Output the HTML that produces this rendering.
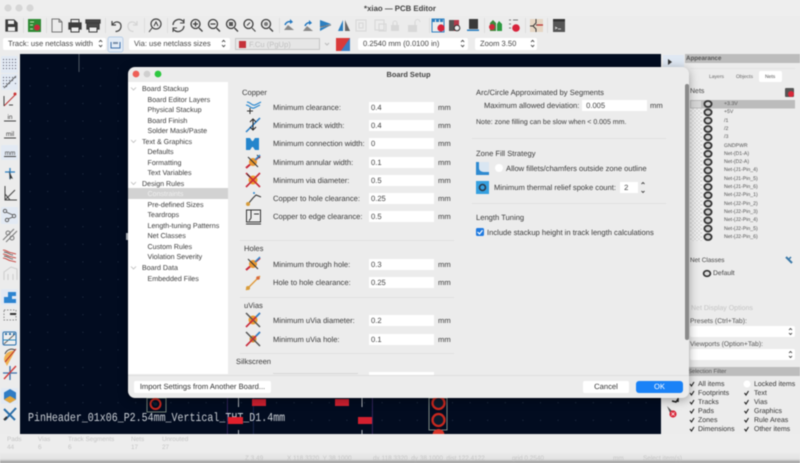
<!DOCTYPE html>
<html><head><meta charset="utf-8">
<style>
html,body{margin:0;padding:0;width:800px;height:463px;overflow:hidden;background:#ececec}
body{font-family:"Liberation Sans",sans-serif;color:#3a3a3a;position:relative;text-rendering:geometricPrecision}
.a{position:absolute}
.t{position:absolute;white-space:nowrap;line-height:10px;font-size:7.6px;margin-top:.6px}
.r{font-size:7.1px}
.i{position:absolute;background:#fff;height:11px;font-size:7.6px;line-height:11px;padding-left:2px;box-sizing:border-box;color:#444}
.s{position:absolute;background:#fff;height:12px;border-radius:2px;font-size:7.6px;line-height:12px;padding-left:5px;box-sizing:border-box;color:#444}
.l{position:absolute;height:1px;background:#e0e0e0}
.n{position:absolute;left:724px;font-size:5.2px;line-height:6px;color:#555;white-space:nowrap}
.c{position:absolute;font-size:7px;line-height:9px;color:#333;white-space:nowrap}
.g{color:#c4c4c4;font-size:6.4px}
#all{position:absolute;left:0;top:0;width:800px;height:463px;filter:blur(.45px)}
</style></head><body><div id="all">

<svg class="a" style="left:0;top:0" width="800" height="463" viewBox="0 0 800 463">
<defs>
<pattern id="d" x="12" y="15" width="17.6" height="17.6" patternUnits="userSpaceOnUse"><rect width="1" height="1" fill="#26344a"/></pattern>
<pattern id="ck" width="4" height="4" patternUnits="userSpaceOnUse"><rect width="4" height="4" fill="#f4f4f4"/><rect width="2" height="2" fill="#d9d9d9"/><rect x="2" y="2" width="2" height="2" fill="#d9d9d9"/></pattern>
<linearGradient id="bt" x1="0" y1="0" x2="0" y2="1"><stop offset="0" stop-color="#e9e9e9"/><stop offset=".6" stop-color="#e4e4e4"/><stop offset="1" stop-color="#8f8f8f"/></linearGradient>
</defs>
<rect width="800" height="463" fill="#ececec"/>
<rect y="0" width="800" height="16" fill="#eeeeee"/>
<circle cx="8" cy="8" r="3.6" fill="#d6d6d6"/><circle cx="19" cy="8" r="3.6" fill="#d6d6d6"/><circle cx="30" cy="8" r="3.6" fill="#d6d6d6"/>
<!-- canvas -->
<rect x="20" y="54" width="641" height="380" fill="#020c20"/>
<rect x="20" y="54" width="641" height="380" fill="url(#d)"/>
<rect x="78.5" y="54" width="1" height="18" fill="#4b5563"/>
<rect x="126" y="233" width="2" height="7" fill="#b9bec6"/>
<!-- canvas footprint stuff -->
<g>
<rect x="147" y="398" width="19" height="14" fill="none" stroke="#8a9a8a" stroke-width=".8"/>
<circle cx="155.500" cy="404" r="5" fill="none" stroke="#c8281f" stroke-width="2"/><circle cx="155.500" cy="404" r="2" fill="#0a2030"/>
<rect x="429" y="398" width="18" height="32" fill="none" stroke="#9aa79a" stroke-width=".8"/>
<circle cx="438.500" cy="403" r="6" fill="#0b1b2c" stroke="#c8281f" stroke-width="2.300"/><circle cx="438.500" cy="420" r="6" fill="#0b1b2c" stroke="#c8281f" stroke-width="2.300"/><circle cx="438.500" cy="435" r="6" fill="#d8352a"/>
<rect x="227" y="398" width=".8" height="36" fill="#3d2a66"/><rect x="372" y="398" width=".8" height="36" fill="#3d2a66"/><rect x="253" y="398" width=".8" height="36" fill="#1c2a55"/>
<rect x="238" y="398" width="1" height="9" fill="#aeb3b8"/><rect x="238" y="430" width="1" height="4" fill="#aeb3b8"/>
<rect x="361.500" y="398" width="1" height="9" fill="#aeb3b8"/><rect x="361.500" y="430" width="1" height="4" fill="#aeb3b8"/>
<rect x="252" y="399" width="14" height="7" fill="#cf2030"/><rect x="335" y="399" width="14" height="7" fill="#cf2030"/>
<rect x="358" y="417" width="14" height="7" fill="#d3202f"/>
</g>
<!-- separators in toolbar -->
<g fill="#dcdcdc"><rect x="23" y="18" width="1" height="15"/><rect x="46" y="18" width="1" height="15"/><rect x="105" y="18" width="1" height="15"/><rect x="144" y="18" width="1" height="15"/><rect x="167" y="18" width="1" height="15"/><rect x="279" y="18" width="1" height="15"/><rect x="429" y="18" width="1" height="15"/><rect x="484" y="18" width="1" height="15"/><rect x="525" y="18" width="1" height="15"/><rect x="547" y="18" width="1" height="15"/></g>
<!-- top toolbar icons -->
<g fill="none" stroke="#3c3c3c" stroke-width="1.300">
<path d="M6 20h8l3 3v8H6z" fill="#3c3c3c"/><rect x="8" y="20.500" width="6" height="3.500" fill="#eee" stroke="none"/><rect x="8" y="27" width="7" height="4" fill="#eee" stroke="none"/>
<path d="M52 19h7l3 3v10H52z" stroke="#777" stroke-width="1"/><path d="M59 19v3h3" stroke="#777" stroke-width="1"/>
<rect x="69" y="23" width="12" height="6" fill="#3c3c3c"/><rect x="71" y="19.500" width="8" height="3.500" stroke-width="1"/><rect x="71" y="27" width="8" height="5" fill="#eee" stroke-width="1"/>
<rect x="87" y="23" width="12" height="6" fill="#4a4a4a"/><rect x="86" y="20" width="14" height="3" fill="#4a4a4a"/><rect x="89" y="27" width="8" height="5" fill="#eee" stroke-width="1"/>
<path d="M112 21v4h4M112.500 24.500c3-4 8-3 8.500 1 .3 3.500-2 6-5.500 6" stroke="#444" stroke-width="1.200"/>
<path d="M137 21v4h-4M136.500 24.500c-3-4-8-3-8.500 1-.3 3.500 2 6 5.500 6" stroke="#d4d4d4" stroke-width="1.200"/>
<circle cx="156" cy="24" r="5" stroke="#444" stroke-width="1.200"/><path d="M152 28l-3 4M154 26l2-4 2 4" stroke-width="1"/>
<path d="M173 25a6 6 0 0 1 10-4l1 1M184 26a6 6 0 0 1-10 4l-1-1" stroke="#444" stroke-width="1.300"/><path d="M184 19v4h-4M173 32v-4h4" stroke="#444" stroke-width="1"/>
<circle cx="195.500" cy="24" r="4.500"/><path d="M199 28l3.500 3.500M193 24h5M195.500 21.500v5"/>
<circle cx="213" cy="24" r="4.500"/><path d="M216.500 28l3.500 3.500M210.500 24h5"/>
<circle cx="231" cy="24" r="4.500"/><path d="M234.500 28l3.500 3.500"/><rect x="229" y="22" width="4" height="4" fill="#555" stroke="none"/>
<circle cx="248.500" cy="24" r="4.500"/><path d="M252 28l3.500 3.500M247 25.500l3-3" stroke-width="1"/>
<circle cx="266" cy="24" r="4.500"/><path d="M269.500 28l3.500 3.500"/><circle cx="266" cy="24" r="2" fill="#777" stroke="none"/>
</g>
<!-- kicad board icon -->
<rect x="28" y="19" width="13" height="13" fill="#2f8a34"/><circle cx="37" cy="27.500" r="3" fill="#c9283a"/><path d="M30 22h4M30 25h3M30 29h3" stroke="#bfe0b0" stroke-width="1"/>
<!-- flip / mirror icons -->
<path d="M284 30l4-5 6 5z" fill="#888"/><path d="M285 25c1-3 4-4 6-3" stroke="#2277c0" stroke-width="1.500" fill="none"/><path d="M290 19l3 3-3 2z" fill="#2277c0"/>
<path d="M303 31l4-5 6 5z" fill="#888"/><path d="M305 26c1-3 4-4 6-3" stroke="#2277c0" stroke-width="1.500" fill="none"/><path d="M309 20l3 3-3 2z" fill="#2277c0"/>
<path d="M320 20l11 4-11 3zM320 28l11-3-11 6z" fill="#2c7fc0"/><path d="M320 27l11-2" stroke="#777"/>
<path d="M343 20l-5 11h5z" fill="#2c7fc0"/><path d="M345 20l5 11h-5z" fill="#666"/>
<g fill="none" stroke="#d8d8d8" stroke-width="1.100"><rect x="356" y="20" width="10" height="11"/><rect x="359" y="23" width="4" height="5"/><rect x="375" y="20" width="9" height="10"/><rect x="379" y="24" width="7" height="7"/></g>
<rect x="391" y="25" width="8" height="6" fill="#d8d8d8"/><path d="M393 25v-2a2 2 0 0 1 4 0v2" fill="none" stroke="#d8d8d8"/>
<rect x="408" y="25" width="9" height="7" fill="#d8d8d8"/><path d="M415 25v-3a2.500 2.500 0 0 1 5 0" fill="none" stroke="#d8d8d8"/>
<!-- right icons toolbar -->
<g fill="#2c7fc0"><rect x="432" y="19" width="3" height="3"/><rect x="436" y="19" width="3" height="3"/><rect x="440" y="19" width="3" height="3"/></g><rect x="432" y="19" width="12" height="13" fill="none" stroke="#2c7fc0"/><circle cx="441" cy="28" r="3.600" fill="#d8243c"/>
<rect x="449" y="20" width="5" height="11" fill="#555"/><rect x="454" y="20" width="5" height="11" fill="#b43a4a"/><circle cx="457" cy="28" r="2.800" fill="#eee" stroke="#333"/>
<rect x="469" y="19" width="9" height="10" fill="#3a3a3a"/><rect x="467" y="29.500" width="12" height="1.500" fill="#2c7fc0"/>
<path d="M490 31V23l3-3 3 3v8z" fill="#3b8a3a"/><path d="M497 31V24l2-3 3 3v7z" fill="#2c9a40"/><circle cx="492" cy="27" r="3" fill="#cf2a3a"/>
<path d="M509 20h2M509 24h2M509 28h2" stroke="#777" fill="none"/><path d="M513 20h5" stroke="#777"/><circle cx="516" cy="28" r="3.800" fill="#d8243c"/>
<rect x="530" y="19" width="13" height="13" fill="#e6d6c4"/><path d="M536 19v4l-3 3 3 3v3M533 26h-3M536 25h7" stroke="#3a3a3a" fill="none"/><path d="M537 25h6" stroke="#b33" stroke-width="1.300"/>
<rect x="553" y="19" width="12" height="13" fill="#555"/><rect x="553" y="19" width="12" height="2.500" fill="#333"/><path d="M555 27l2 1-2 1M558 29h3" stroke="#eee" stroke-width=".7" fill="none"/>
<!-- toolbar 2 extras -->
<rect x="108" y="37" width="15" height="15" rx="2" fill="#e2ebf6" stroke="#a9c4e2" stroke-width=".7"/><path d="M111 42v6h9v-6" stroke="#3c6ea8" fill="none"/><rect x="113" y="42" width="5" height="2" fill="#7a8fa8"/>
<rect x="336" y="38" width="14" height="13" fill="#d93a3a"/><path d="M350 38v13h-9z" fill="#3d7fc4"/>
<path d="M325 43l2 2 2-2" stroke="#bbb" fill="none"/>
<!-- left toolbar -->
<rect x="1" y="56" width="17" height="17" rx="1" fill="#e2e9f3"/><rect x="1" y="74" width="17" height="16" rx="1" fill="#e2e9f3"/>
<rect x="1" y="145" width="17" height="15" rx="1" fill="#e2e9f3"/><rect x="1" y="207" width="17" height="17" rx="1" fill="#e2e9f3"/>
<rect x="1" y="289" width="17" height="16" rx="1" fill="#e2e9f3"/><rect x="1" y="330" width="17" height="16" rx="1" fill="#e2e9f3"/><rect x="1" y="388" width="17" height="16" rx="1" fill="#e2e9f3"/>
<g fill="#556"><path d="M3 59h1v1H3zM6 59h1v1H6zM9 59h1v1H9zM12 59h1v1h-1zM15 59h1v1h-1zM3 62h1v1H3zM6 62h1v1H6zM9 62h1v1H9zM12 62h1v1h-1zM15 62h1v1h-1zM3 65h1v1H3zM6 65h1v1H6zM9 65h1v1H9zM12 65h1v1h-1zM15 65h1v1h-1zM3 68h1v1H3zM6 68h1v1H6zM9 68h1v1H9zM12 68h1v1h-1zM15 68h1v1h-1zM3 77h1v1H3zM6 77h1v1H6zM9 77h1v1H9zM12 77h1v1h-1zM15 77h1v1h-1zM3 80h1v1H3zM6 80h1v1H6zM9 80h1v1H9zM12 80h1v1h-1zM3 83h1v1H3zM6 83h1v1H6zM9 83h1v1H9zM3 86h1v1H3zM6 86h1v1H6zM15 83h1v1h-1z"/></g>
<path d="M4 88L16 76" stroke="#666" fill="none"/>
<path d="M4 106L15 95" stroke="#b33" stroke-width="1" fill="none"/><circle cx="15" cy="94" r="1.500" fill="#c33"/><path d="M4 96v10M9 105h4" stroke="#444" fill="none"/>
<g font-family="Liberation Sans" font-size="6.500" fill="#444" text-anchor="middle"><text x="10" y="119">in</text><text x="10" y="136">mil</text><text x="10" y="155">mm</text></g>
<g stroke="#444" fill="none" stroke-width=".9"><path d="M4 121h12M4 138h12M4 156.500h12"/></g>
<path d="M10 168v11M5 172h10" stroke="#2c7fc0" stroke-width="1.300"/><path d="M9 171l4 8-2-1-1 2z" fill="#333"/>
<path d="M5 186v14h12M5 200L15 190M5 194l5 6" stroke="#444" stroke-width="1" fill="none"/>
<g stroke="#555" fill="none" stroke-width=".9"><circle cx="5" cy="211" r="1.700"/><circle cx="14" cy="216" r="1.700"/><circle cx="7" cy="220" r="1.700"/><path d="M6 212l7 3M13 217l-5 2"/></g>
<g stroke="#777" fill="none" stroke-width="1"><path d="M3 240l11-11M6 242l11-11"/><circle cx="8" cy="233" r="2"/><circle cx="12" cy="238" r="2"/></g>
<path d="M3 250c4 0 5 3 9 3l4 1M3 254c4 0 5 3 9 3l4 1M3 258c4 0 5 3 9 3l4 1" stroke="#c8504a" stroke-width="1.100" fill="none"/><path d="M4 252c4 0 5 3 9 3M4 256c4 0 5 3 9 3" stroke="#333" stroke-width=".7" fill="none"/>
<path d="M4 280v-8l7-5 6 2v11M8 280v-6M13 280v-6" stroke="#ccc" fill="none"/>
<path d="M8 292h8v4h-4v3h4v4H4v-6h4z" fill="#2c84d0"/>
<rect x="4" y="310" width="12" height="10" fill="none" stroke="#888" stroke-dasharray="1.500 1.500"/><rect x="10" y="313" width="6" height="2" fill="#333"/>
<rect x="3" y="332" width="13" height="13" rx="1.500" fill="#eee" stroke="#2a6ea8"/><path d="M4 344l11-10" stroke="#666"/><path d="M5 334h2M9 334h2M13 334h2" stroke="#2a6ea8" stroke-width="2"/><path d="M3 340h13" stroke="#2a8ac0"/>
<path d="M4 360a9 9 0 0 1 11-9l-8 15z" fill="#efb050"/><path d="M5 362l11-13" stroke="#b33" stroke-width="1"/><path d="M5 354a7 7 0 0 1 10-4" stroke="#444" fill="none"/>
<path d="M3 373h14M10 366v14" stroke="#3a6ea8" stroke-width="1.300"/><path d="M4 379l12-13" stroke="#d03a3a" stroke-width="1.400"/>
<path d="M10 389l6 3.500v7L10 403l-6-3.500v-7z" fill="#2f7cc4"/><path d="M10 396l6 3.500L10 403l-6-3.500z" fill="#e5a63a"/>
<path d="M4 409l11 11M16 408l-11 12" stroke="#2a6ea8" stroke-width="2"/><path d="M4 420l3-3" stroke="#333" stroke-width="2"/>
<!-- right tool strip -->
<rect x="661" y="54" width="24" height="380" fill="#ececec"/>
<rect x="663" y="55" width="21" height="12" fill="#dfe8f3"/><path d="M668 59l4 3-4 3z" fill="#333"/>
<path d="M667 406l3 7 1-2 2 1z" fill="#555"/><circle cx="673" cy="414" r="3.600" fill="#d9283a"/><path d="M671.500 412.500l3 3M674.500 412.500l-3 3" stroke="#fff" stroke-width=".8"/>
<path d="M672 401l4 1 2-3v3" stroke="#222" stroke-width="1.500" fill="none"/>
<!-- right panel -->
<rect x="685" y="54" width="115" height="9" fill="#bcbcbc"/>
<rect x="685" y="63" width="115" height="304" fill="#ececec"/>
<rect x="690" y="68" width="105" height="1" fill="#e3e3e3"/>
<rect x="759" y="71" width="23" height="11" rx="2" fill="#fff"/>
<rect x="690" y="100" width="12" height="141" fill="url(#ck)"/>
<rect x="690" y="100" width="105" height="8.500" fill="#bcbcbc"/>
<rect x="691" y="101" width="10" height="6.500" fill="#d8d8d8"/>
<g fill="#d0d0d0" stroke="#333" stroke-width="1.800">
<ellipse cx="708" cy="104" rx="3.600" ry="3"/><ellipse cx="708" cy="112.300" rx="3.600" ry="3"/><ellipse cx="708" cy="120.600" rx="3.600" ry="3"/><ellipse cx="708" cy="129" rx="3.600" ry="3"/><ellipse cx="708" cy="137.200" rx="3.600" ry="3"/><ellipse cx="708" cy="145.500" rx="3.600" ry="3"/><ellipse cx="708" cy="153.800" rx="3.600" ry="3"/><ellipse cx="708" cy="162.100" rx="3.600" ry="3"/><ellipse cx="708" cy="170.400" rx="3.600" ry="3"/><ellipse cx="708" cy="178.700" rx="3.600" ry="3"/><ellipse cx="708" cy="187" rx="3.600" ry="3"/><ellipse cx="708" cy="195.300" rx="3.600" ry="3"/><ellipse cx="708" cy="203.600" rx="3.600" ry="3"/><ellipse cx="708" cy="212" rx="3.600" ry="3"/><ellipse cx="708" cy="220.300" rx="3.600" ry="3"/><ellipse cx="708" cy="228.600" rx="3.600" ry="3"/><ellipse cx="708" cy="237" rx="3.600" ry="3"/>
</g>
<rect x="785" y="88" width="9" height="9" rx="1" fill="#555"/><circle cx="791" cy="94" r="3" fill="#d8283a"/>
<ellipse cx="707" cy="273.500" rx="3.400" ry="2.800" fill="#ddd" stroke="#333" stroke-width="1.700"/>
<path d="M786 257l6 6" stroke="#3a78a8" stroke-width="2"/><path d="M791 257l-2 2" stroke="#3a78a8" stroke-width="1.500"/>
<rect x="690" y="326" width="105" height="11" rx="2" fill="#fff"/><rect x="690" y="349" width="105" height="11" rx="2" fill="#fff"/>
<path d="M789 330l1.500-1.500 1.500 1.500M789 333l1.500 1.500 1.500-1.500M789 353l1.500-1.500 1.500 1.500M789 356l1.500 1.500 1.500-1.500" stroke="#333" fill="none" stroke-width=".8"/>
<rect x="685" y="367" width="115" height="9" fill="#bdbdbd"/>
<circle cx="747" cy="384" r="3.500" fill="#fff"/>
<g fill="none" stroke="#222" stroke-width="1.100"><path d="M690 384l1.500 2 2.500-4M690 393l1.500 2 2.500-4M690 402l1.500 2 2.500-4M690 411l1.500 2 2.500-4M690 420l1.500 2 2.500-4M690 429l1.500 2 2.500-4M744.500 393l1.500 2 2.500-4M744.500 402l1.500 2 2.500-4M744.500 411l1.500 2 2.500-4M744.500 420l1.500 2 2.500-4M744.500 429l1.500 2 2.500-4"/></g>
<!-- bottom -->
<rect x="0" y="434" width="800" height="19" fill="#ededed"/>
<rect x="0" y="453" width="800" height="10" fill="url(#bt)"/>
</svg>

<!-- main text -->
<div class="t" style="left:0;width:800px;text-align:center;top:3px;font-weight:bold;font-size:7.8px;color:#444">*xiao — PCB Editor</div>
<div class="s" style="left:3px;top:38px;width:103px;padding-left:5px">Track: use netclass width</div>
<div class="s" style="left:129px;top:38px;width:101px">Via: use netclass sizes</div>
<div class="a" style="left:235px;top:38px;width:85px;height:12px;background:#e6e6e6;border:1px solid #c6c6c6;box-sizing:border-box"></div>
<div class="a" style="left:239px;top:40.500px;width:7px;height:7px;background:#c5323a"></div>
<div class="t" style="left:249px;top:39px;color:#c0c0c0">F.Cu (PgUp)</div>
<div class="s" style="left:358px;top:38px;width:110px">0.2540 mm (0.0100 in)</div>
<div class="s" style="left:475px;top:38px;width:62px">Zoom 3.50</div>
<svg class="a" style="left:0;top:36px" width="560" height="16" fill="none" stroke="#444" stroke-width=".9"><path d="M99 6l1.600-1.700 1.600 1.700M99 9l1.600 1.700 1.600-1.700M222 6l1.600-1.700 1.600 1.700M222 9l1.600 1.700 1.600-1.700M461 6l1.600-1.700 1.600 1.700M461 9l1.600 1.700 1.600-1.700M531 6l1.600-1.700 1.600 1.700M531 9l1.600 1.700 1.600-1.700"/></svg>

<div class="a" style="left:28px;top:413px;font-family:'Liberation Mono',monospace;font-size:11px;line-height:12px;white-space:nowrap;color:#c9ced4;transform:scale(.906,1.1);transform-origin:0 50%">PinHeader_01x06_P2.54mm_Vertical_THT_D1.4mm</div>
<svg class="a" style="left:226px;top:415px" width="20" height="12"><rect x="2" y="2" width="15" height="7" fill="#e0202c"/></svg>

<!-- right panel text -->
<div class="t" style="left:686px;top:53.500px;font-size:6.200px;color:#555;font-weight:bold">Appearance</div>
<div class="t" style="left:709px;top:71px;font-size:5px;color:#666">Layers</div>
<div class="t" style="left:736px;top:71px;font-size:5px;color:#666">Objects</div>
<div class="t" style="left:765px;top:71px;font-size:5px;color:#555">Nets</div>
<div class="t" style="left:690px;top:86px;font-size:7px;color:#444">Nets</div>
<div class="n" style="top:101px">+3.3V</div><div class="n" style="top:109.300px">+5V</div><div class="n" style="top:117.600px">/1</div><div class="n" style="top:126px">/2</div><div class="n" style="top:134.200px">/3</div><div class="n" style="top:142.500px">GNDPWR</div><div class="n" style="top:150.800px">Net-(D1-A)</div><div class="n" style="top:159.100px">Net-(D2-A)</div><div class="n" style="top:167.400px">Net-(J1-Pin_4)</div><div class="n" style="top:175.700px">Net-(J1-Pin_5)</div><div class="n" style="top:184px">Net-(J1-Pin_6)</div><div class="n" style="top:192.300px">Net-(J2-Pin_1)</div><div class="n" style="top:200.600px">Net-(J2-Pin_2)</div><div class="n" style="top:209px">Net-(J2-Pin_3)</div><div class="n" style="top:217.300px">Net-(J2-Pin_4)</div><div class="n" style="top:225.600px">Net-(J2-Pin_5)</div><div class="n" style="top:234px">Net-(J2-Pin_6)</div>
<div class="t" style="left:690px;top:255px;font-size:6.400px;color:#444">Net Classes</div>
<div class="t" style="left:713px;top:268px;font-size:6.800px;color:#444">Default</div>
<div class="t" style="left:691px;top:303px;font-size:7px;color:#c4c4c4">Net Display Options</div>
<div class="t" style="left:690px;top:316px;font-size:6.800px;color:#555">Presets (Ctrl+Tab):</div>
<div class="t" style="left:690px;top:339px;font-size:6.800px;color:#555">Viewports (Option+Tab):</div>
<div class="t" style="left:688px;top:366.500px;font-size:5.800px;color:#555">Selection Filter</div>
<div class="c" style="left:698px;top:379.500px">All items</div><div class="c" style="left:698px;top:388.500px">Footprints</div><div class="c" style="left:698px;top:397.500px">Tracks</div><div class="c" style="left:698px;top:406.500px">Pads</div><div class="c" style="left:698px;top:415.500px">Zones</div><div class="c" style="left:698px;top:424.500px">Dimensions</div>
<div class="c" style="left:754px;top:379.500px">Locked items</div><div class="c" style="left:754px;top:388.500px">Text</div><div class="c" style="left:754px;top:397.500px">Vias</div><div class="c" style="left:754px;top:406.500px">Graphics</div><div class="c" style="left:754px;top:415.500px">Rule Areas</div><div class="c" style="left:754px;top:424.500px">Other items</div>

<!-- bottom text -->
<div class="t g" style="left:7px;top:434px">Pads</div><div class="t g" style="left:7px;top:442px">44</div>
<div class="t g" style="left:38px;top:434px">Vias</div><div class="t g" style="left:38px;top:442px">6</div>
<div class="t g" style="left:68px;top:434px">Track Segments</div><div class="t g" style="left:68px;top:442px">6</div>
<div class="t g" style="left:131px;top:434px">Nets</div><div class="t g" style="left:131px;top:442px">17</div>
<div class="t g" style="left:162px;top:434px">Unrouted</div><div class="t g" style="left:162px;top:442px">27</div>
<div class="t g" style="left:245px;top:453px">Z 3.49</div><div class="t g" style="left:287px;top:453px">X 118.3320&nbsp; Y 38.1000</div><div class="t g" style="left:373px;top:453px">dx 118.3320&nbsp; dy 38.1000&nbsp; dist 122.4122</div><div class="t g" style="left:512px;top:453px">grid 0.2540</div><div class="t g" style="left:613px;top:453px">mm</div><div class="t g" style="left:643px;top:453px">Select item(s)</div>

<!-- DIALOG -->
<div class="a" style="left:128px;top:67px;width:561px;height:331px;background:#ececec;border-radius:7px;box-shadow:0 2px 10px rgba(0,0,0,.35);overflow:hidden">
<div class="a" style="left:0;top:15px;width:100px;height:292px;background:#fff"></div>
<div class="a" style="left:0;top:121px;width:100px;height:11px;background:#d2d2d2"></div>
<div class="a" style="left:0;top:307.500px;width:561px;height:1px;background:#dedede"></div>
<div class="a" style="left:557px;top:17px;width:4px;height:256px;background:#8a8a8a;border-radius:2px"></div>
</div>
<svg class="a" style="left:128px;top:67px" width="561" height="331"><circle cx="8" cy="7" r="3.400" fill="#ee5f57"/><circle cx="19" cy="7" r="3.400" fill="#cfcfcf"/><circle cx="30" cy="7" r="3.400" fill="#2dc840"/>
<path d="M3 20.500l2.500 2.500 2.500-2.500M3 73l2.500 2.500 2.500-2.500M3 115l2.500 2.500 2.500-2.500M3 199.500l2.500 2.500 2.500-2.500" stroke="#bbb" fill="none" stroke-width=".8"/></svg>
<div class="t" style="left:128px;width:561px;text-align:center;top:69px;font-weight:bold;font-size:7.400px;color:#444">Board Setup</div>

<div class="t r" style="left:142px;top:83.500px">Board Stackup</div>
<div class="t r" style="left:147.500px;top:94px">Board Editor Layers</div>
<div class="t r" style="left:147.500px;top:104.500px">Physical Stackup</div>
<div class="t r" style="left:147.500px;top:115px">Board Finish</div>
<div class="t r" style="left:147.500px;top:125.500px">Solder Mask/Paste</div>
<div class="t r" style="left:142px;top:136px">Text &amp; Graphics</div>
<div class="t r" style="left:147.500px;top:146.500px">Defaults</div>
<div class="t r" style="left:147.500px;top:157px">Formatting</div>
<div class="t r" style="left:147.500px;top:167.500px">Text Variables</div>
<div class="t r" style="left:142px;top:178px">Design Rules</div>
<div class="t r" style="left:147.500px;top:188.500px;color:#f0f0f0">Constraints</div>
<div class="t r" style="left:147.500px;top:199px">Pre-defined Sizes</div>
<div class="t r" style="left:147.500px;top:209.500px">Teardrops</div>
<div class="t r" style="left:147.500px;top:220px">Length-tuning Patterns</div>
<div class="t r" style="left:147.500px;top:230.500px">Net Classes</div>
<div class="t r" style="left:147.500px;top:241px">Custom Rules</div>
<div class="t r" style="left:147.500px;top:251.500px">Violation Severity</div>
<div class="t r" style="left:142px;top:262.500px">Board Data</div>
<div class="t r" style="left:147.500px;top:273px">Embedded Files</div>

<!-- constraints -->
<div class="t" style="left:242px;top:87px">Copper</div>
<div class="t" style="left:273px;top:102px">Minimum clearance:</div><div class="i" style="left:369px;top:101.500px;width:65px">0.4</div><div class="t" style="left:438px;top:102px">mm</div>
<div class="t" style="left:273px;top:120.500px">Minimum track width:</div><div class="i" style="left:369px;top:120px;width:65px">0.4</div><div class="t" style="left:438px;top:120.500px">mm</div>
<div class="t" style="left:273px;top:138.500px">Minimum connection width:</div><div class="i" style="left:369px;top:138px;width:65px">0</div><div class="t" style="left:438px;top:138.500px">mm</div>
<div class="t" style="left:273px;top:157px">Minimum annular width:</div><div class="i" style="left:369px;top:156.500px;width:65px">0.1</div><div class="t" style="left:438px;top:157px">mm</div>
<div class="t" style="left:273px;top:175px">Minimum via diameter:</div><div class="i" style="left:369px;top:175px;width:65px">0.5</div><div class="t" style="left:438px;top:175px">mm</div>
<div class="t" style="left:273px;top:193.500px">Copper to hole clearance:</div><div class="i" style="left:369px;top:193px;width:65px">0.25</div><div class="t" style="left:438px;top:193.500px">mm</div>
<div class="t" style="left:273px;top:211.500px">Copper to edge clearance:</div><div class="i" style="left:369px;top:211px;width:65px">0.5</div><div class="t" style="left:438px;top:211.500px">mm</div>
<div class="l" style="left:240px;top:240px;width:214px"></div>
<div class="t" style="left:244px;top:243px">Holes</div>
<div class="t" style="left:273px;top:259px">Minimum through hole:</div><div class="i" style="left:369px;top:258.500px;width:65px">0.3</div><div class="t" style="left:438px;top:259px">mm</div>
<div class="t" style="left:273px;top:277.500px">Hole to hole clearance:</div><div class="i" style="left:369px;top:277px;width:65px">0.25</div><div class="t" style="left:438px;top:277.500px">mm</div>
<div class="l" style="left:240px;top:297px;width:214px"></div>
<div class="t" style="left:244px;top:300px">uVias</div>
<div class="t" style="left:273px;top:315.500px">Minimum uVia diameter:</div><div class="i" style="left:369px;top:315px;width:65px">0.2</div><div class="t" style="left:438px;top:315.500px">mm</div>
<div class="t" style="left:273px;top:334px">Minimum uVia hole:</div><div class="i" style="left:369px;top:333.500px;width:65px">0.1</div><div class="t" style="left:438px;top:334px">mm</div>
<div class="l" style="left:240px;top:353px;width:214px"></div>
<div class="t" style="left:236px;top:356px">Silkscreen</div>
<div class="a" style="left:369px;top:371.500px;width:65px;height:3px;background:#fff"></div>
<div class="a" style="left:273px;top:373px;width:85px;height:1px;background:#d6d6d6"></div>

<div class="t" style="left:476px;top:87px">Arc/Circle Approximated by Segments</div>
<div class="t" style="left:484px;top:100.500px">Maximum allowed deviation:</div><div class="i" style="left:582px;top:100px;width:65px">&nbsp;0.005</div><div class="t" style="left:650px;top:100.500px">mm</div>
<div class="t" style="left:476px;top:117px;font-size:7px">Note: zone filling can be slow when &lt; 0.005 mm.</div>
<div class="l" style="left:472px;top:138px;width:194px"></div>
<div class="t" style="left:476px;top:148px">Zone Fill Strategy</div>
<div class="a" style="left:495px;top:164px;width:8px;height:8px;border-radius:50%;background:#fff"></div>
<div class="t" style="left:506px;top:163.500px">Allow fillets/chamfers outside zone outline</div>
<div class="t" style="left:494px;top:182px">Minimum thermal relief spoke count:</div><div class="i" style="left:620px;top:181.500px;width:18px">&nbsp;2</div>
<div class="l" style="left:472px;top:203px;width:194px"></div>
<div class="t" style="left:476px;top:212.500px">Length Tuning</div>
<div class="t" style="left:487px;top:227px">Include stackup height in track length calculations</div>
<svg class="a" style="left:470px;top:155px" width="190" height="85">
<rect x="6" y="7" width="13" height="13" fill="#d9e6f2"/><path d="M6 7h3v6c0 3 3 4 5 4h5v3H6z" fill="#2e8ad0"/>
<rect x="6" y="26" width="13" height="13" fill="#35a0e0"/><circle cx="12.500" cy="32.500" r="3" fill="none" stroke="#2b3a4a" stroke-width="1.600"/>
<rect x="6" y="73" width="8" height="8" rx="1.500" fill="#1f7ae0"/><path d="M7.500 77l2 2 3-3.800" stroke="#fff" stroke-width="1.200" fill="none"/>
<path d="M171.500 29l1.500-1.500 1.500 1.500M171.500 36l1.500 1.500 1.500-1.500" stroke="#444" fill="none" stroke-width=".9"/>
</svg>

<!-- dialog icons -->
<svg class="a" style="left:240px;top:95px" width="30" height="260" fill="none">
<g transform="translate(5,4)"><path d="M2 3c4 0 4 4 8 3l6-3M1 6c4 0 4 4 8 3l6-3" stroke="#2e8ad0" stroke-width="1.200"/><path d="M5 9v6M2 12h6" stroke="#333"/></g>
<g transform="translate(5,22)"><path d="M1 15L15 1" stroke="#2b7ec4" stroke-width="1.500"/><path d="M8 3v9M5 5l3-3 3 3M5 10l3 3 3-3" stroke="#222"/></g>
<path d="M6 43h4l2 3h1l2-3h4v12h-4l-2-3h-1l-2 3H6z" fill="#2485cc"/>
<g transform="translate(5,59)"><path d="M1 14L15 2" stroke="#c92a3a" stroke-width="2"/><circle cx="8" cy="8" r="4" fill="#e8962f"/><path d="M3 3l10 10M12 1l3 3" stroke="#333"/><path d="M10 6L15 1" stroke="#2e8ad0" stroke-width="1.500"/></g>
<g transform="translate(5,77)"><circle cx="8" cy="8" r="4.500" fill="#eb9a2e"/><path d="M1 1l14 14M1 15L15 1" stroke="#c92a3a" stroke-width="1.600"/><path d="M2 2l3 3" stroke="#333"/></g>
<g transform="translate(5,96)"><path d="M3 13l5-6 3-3 5 2" stroke="#333"/><circle cx="3" cy="13" r="2" fill="#d89c3a"/><circle cx="9" cy="2" r="1" fill="#2e8ad0"/></g>
<g transform="translate(6,114)"><rect x=".500" y="1" width="14" height="12" stroke="#333"/><path d="M5 1v8l-2 3M8 5h5M0 15h15" stroke="#333"/></g>
<g transform="translate(5,161)"><path d="M1 14L15 2" stroke="#c92a3a" stroke-width="2"/><circle cx="8" cy="8" r="4" fill="#e8962f"/><path d="M3 3l10 10" stroke="#333"/><path d="M10 6L15 1" stroke="#2e8ad0" stroke-width="1.500"/></g>
<g transform="translate(5,180)"><path d="M1 15L15 1" stroke="#e09a3c" stroke-width="1.400"/><circle cx="3" cy="13" r="2" fill="#d89c3a"/><circle cx="13" cy="3" r="1.800" fill="#d86a3a"/></g>
<g transform="translate(5,217)"><circle cx="8" cy="8" r="4.500" fill="#eb9a2e"/><path d="M1 1l14 14" stroke="#555" stroke-width="1.500"/><path d="M1 15L15 1" stroke="#c92a3a" stroke-width="1.600"/><path d="M11 5l4-4" stroke="#2e8ad0" stroke-width="1.600"/></g>
<g transform="translate(5,236)"><circle cx="8" cy="8" r="3.500" fill="#d88a2e"/><path d="M1 1l14 14" stroke="#555" stroke-width="1.500"/><path d="M1 15L15 1" stroke="#c92a3a" stroke-width="1.600"/><path d="M11 5l4-4" stroke="#2e8ad0" stroke-width="1.600"/></g>
</svg>

<!-- buttons -->
<div class="a" style="left:134px;top:381px;width:137px;height:12px;background:#fff;border-radius:2px;font-size:7.600px;line-height:12px;text-align:center;color:#333">Import Settings from Another Board...</div>
<div class="a" style="left:583px;top:381px;width:46px;height:12px;background:#fff;border-radius:2px;font-size:7.600px;line-height:12px;text-align:center;color:#333">Cancel</div>
<div class="a" style="left:636px;top:381px;width:47px;height:12px;background:#1a82f7;border-radius:3px;font-size:7.600px;line-height:12px;text-align:center;color:#fff">OK</div>
</div></body></html>
